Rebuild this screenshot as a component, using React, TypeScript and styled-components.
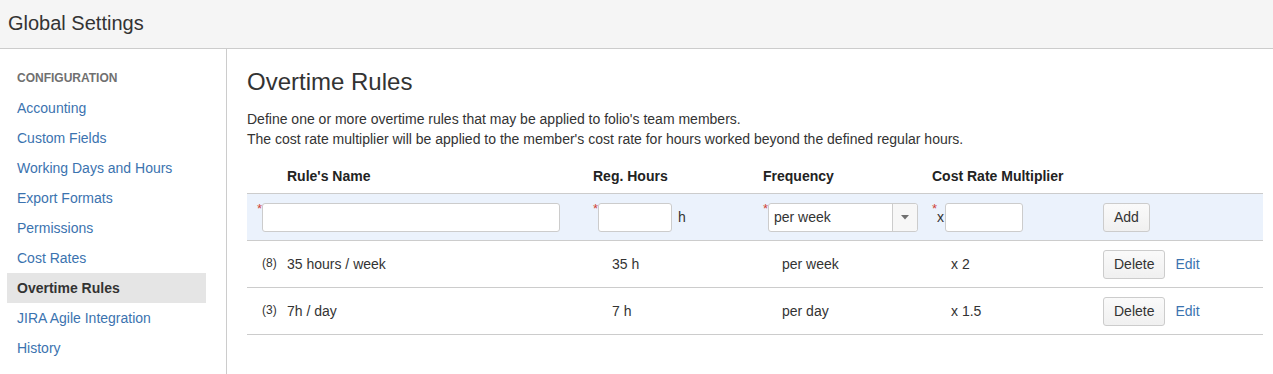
import React from 'react';
import styled, { createGlobalStyle, css } from 'styled-components';

const GlobalStyle = createGlobalStyle`
  html, body {
    margin: 0;
    padding: 0;
    background: #fff;
    font-family: "Liberation Sans", Arial, sans-serif;
    color: #333;
  }
`;

const NAV_ITEMS = [
  'Accounting',
  'Custom Fields',
  'Working Days and Hours',
  'Export Formats',
  'Permissions',
  'Cost Rates',
  'Overtime Rules',
  'JIRA Agile Integration',
  'History',
];

const RULES = [
  { count: 8, name: '35 hours / week', hours: '35 h', frequency: 'per week', multiplier: 'x 2' },
  { count: 3, name: '7h / day', hours: '7 h', frequency: 'per day', multiplier: 'x 1.5' },
];

export default function App() {
  return (
    <>
      <GlobalStyle />
      <PageHeader>
        <PageTitle>Global Settings</PageTitle>
      </PageHeader>
      <Body>
        <Sidebar>
          <NavHeading>CONFIGURATION</NavHeading>
          {NAV_ITEMS.map(item => (
            <NavItem key={item} active={item === 'Overtime Rules'}>
              {item}
            </NavItem>
          ))}
        </Sidebar>
        <Main>
          <Heading>Overtime Rules</Heading>
          <Description>
            Define one or more overtime rules that may be applied to folio's team members.
            <br />
            The cost rate multiplier will be applied to the member's cost rate for hours worked beyond the defined regular hours.
          </Description>
          <RulesTable>
            <colgroup>
              <col style={{ width: 336 }} />
              <col style={{ width: 170 }} />
              <col style={{ width: 169 }} />
              <col style={{ width: 171 }} />
              <col />
            </colgroup>
            <thead>
              <tr>
                <Th first>Rule's Name</Th>
                <Th>Reg. Hours</Th>
                <Th>Frequency</Th>
                <Th>Cost Rate Multiplier</Th>
                <Th />
              </tr>
            </thead>
            <tbody>
              <AddRow>
                <FormCell>
                  <Field>
                    <Required>*</Required>
                    <TextInput width={298} />
                  </Field>
                </FormCell>
                <FormCell>
                  <Field>
                    <Required>*</Required>
                    <TextInput width={74} />
                    <Unit>h</Unit>
                  </Field>
                </FormCell>
                <FormCell>
                  <Field>
                    <Required>*</Required>
                    <SelectBox>
                      <SelectValue>per week</SelectValue>
                      <SelectArrow>
                        <svg width="8" height="5" viewBox="0 0 8 5">
                          <path d="M0 0 L8 0 L4 4.5 Z" fill="#707070" />
                        </svg>
                      </SelectArrow>
                    </SelectBox>
                  </Field>
                </FormCell>
                <FormCell>
                  <Field>
                    <Required>*</Required>
                    <Prefix>x</Prefix>
                    <TextInput width={78} />
                  </Field>
                </FormCell>
                <FormCell>
                  <Button>Add</Button>
                </FormCell>
              </AddRow>
              {RULES.map(rule => (
                <tr key={rule.name}>
                  <NameCell>
                    <Count>({rule.count})</Count>
                    {rule.name}
                  </NameCell>
                  <Td>{rule.hours}</Td>
                  <Td>{rule.frequency}</Td>
                  <Td>{rule.multiplier}</Td>
                  <ActionCell>
                    <Button>Delete</Button>
                    <EditLink href="#">Edit</EditLink>
                  </ActionCell>
                </tr>
              ))}
            </tbody>
          </RulesTable>
        </Main>
      </Body>
    </>
  );
}

const PageHeader = styled.header`
  height: 48px;
  background: #f5f5f5;
  border-bottom: 1px solid #ccc;
  display: flex;
  align-items: center;
  padding-left: 8px;
`;

const PageTitle = styled.h1`
  margin: 0 0 2px;
  font-size: 20px;
  font-weight: normal;
  color: #333;
`;

const Body = styled.div`
  display: flex;
  min-height: calc(100vh - 49px);
`;

const Sidebar = styled.nav`
  width: 227px;
  flex-shrink: 0;
  box-sizing: border-box;
  border-right: 1px solid #ccc;
  padding: 14px 20px 0 7px;
`;

const NavHeading = styled.div`
  height: 30px;
  line-height: 30px;
  padding-left: 10px;
  font-size: 12px;
  font-weight: bold;
  color: #707070;
`;

const NavItem = styled.a<{ active?: boolean }>`
  display: block;
  height: 30px;
  line-height: 30px;
  padding-left: 10px;
  font-size: 14px;
  color: #3b73af;
  text-decoration: none;
  cursor: pointer;
  ${({ active }) =>
    active &&
    css`
      background: #e5e5e5;
      color: #333;
      font-weight: bold;
    `}
`;

const Main = styled.main`
  flex: 1;
  padding: 18px 10px 0 20px;
`;

const Heading = styled.h2`
  margin: 0;
  font-size: 24px;
  line-height: 30px;
  font-weight: normal;
  color: #333;
`;

const Description = styled.p`
  margin: 12px 0 0;
  font-size: 14px;
  line-height: 20px;
  color: #333;
`;

const RulesTable = styled.table`
  width: 100%;
  margin-top: 10px;
  table-layout: fixed;
  border-collapse: collapse;
  font-size: 14px;
`;

const Th = styled.th<{ first?: boolean }>`
  height: 34px;
  padding: 0 0 0 ${({ first }) => (first ? 40 : 10)}px;
  text-align: left;
  font-weight: bold;
  color: #222;
  border-bottom: 1px solid #ccc;
  vertical-align: middle;
`;

const AddRow = styled.tr`
  background: #ebf2fc;
`;

const FormCell = styled.td`
  height: 46px;
  padding: 0 0 0 10px;
  border-bottom: 1px solid #ccc;
  vertical-align: middle;
`;

const Field = styled.div`
  display: flex;
  align-items: center;
`;

const Required = styled.span`
  align-self: flex-start;
  margin-top: -1px;
  width: 5px;
  font-size: 13px;
  line-height: 14px;
  color: #d04437;
`;

const TextInput = styled.input<{ width: number }>`
  box-sizing: border-box;
  width: ${({ width }) => width}px;
  height: 29px;
  border: 1px solid #ccc;
  border-radius: 3px;
  background: #fff;
  font: inherit;
  padding: 0 5px;
`;

const Unit = styled.span`
  margin-left: 6px;
  color: #333;
`;

const Prefix = styled.span`
  width: 8px;
  color: #333;
`;

const SelectBox = styled.div`
  box-sizing: border-box;
  width: 150px;
  height: 29px;
  display: flex;
  border: 1px solid #ccc;
  border-radius: 3px;
  background: #fff;
`;

const SelectValue = styled.span`
  flex: 1;
  padding-left: 5px;
  line-height: 27px;
  color: #333;
`;

const SelectArrow = styled.span`
  width: 24px;
  display: flex;
  align-items: center;
  justify-content: center;
  border-left: 1px solid #ccc;
  background: #f7f7f7;
  border-radius: 0 3px 3px 0;
`;

const Button = styled.button`
  box-sizing: border-box;
  height: 29px;
  padding: 0 10px;
  border: 1px solid #ccc;
  border-radius: 3px;
  background: linear-gradient(#fafafa, #f0f0f0);
  font: inherit;
  font-size: 14px;
  color: #333;
  cursor: pointer;
`;

const Td = styled.td`
  height: 46px;
  padding: 0 0 0 29px;
  border-bottom: 1px solid #ccc;
  vertical-align: middle;
  color: #333;
`;

const NameCell = styled(Td)`
  padding-left: 15px;
`;

const Count = styled.span`
  display: inline-block;
  width: 25px;
  font-size: 12px;
  vertical-align: 2px;
  color: #333;
`;

const ActionCell = styled(Td)`
  padding-left: 10px;
`;

const EditLink = styled.a`
  margin-left: 10px;
  color: #3b73af;
  text-decoration: none;
`;
